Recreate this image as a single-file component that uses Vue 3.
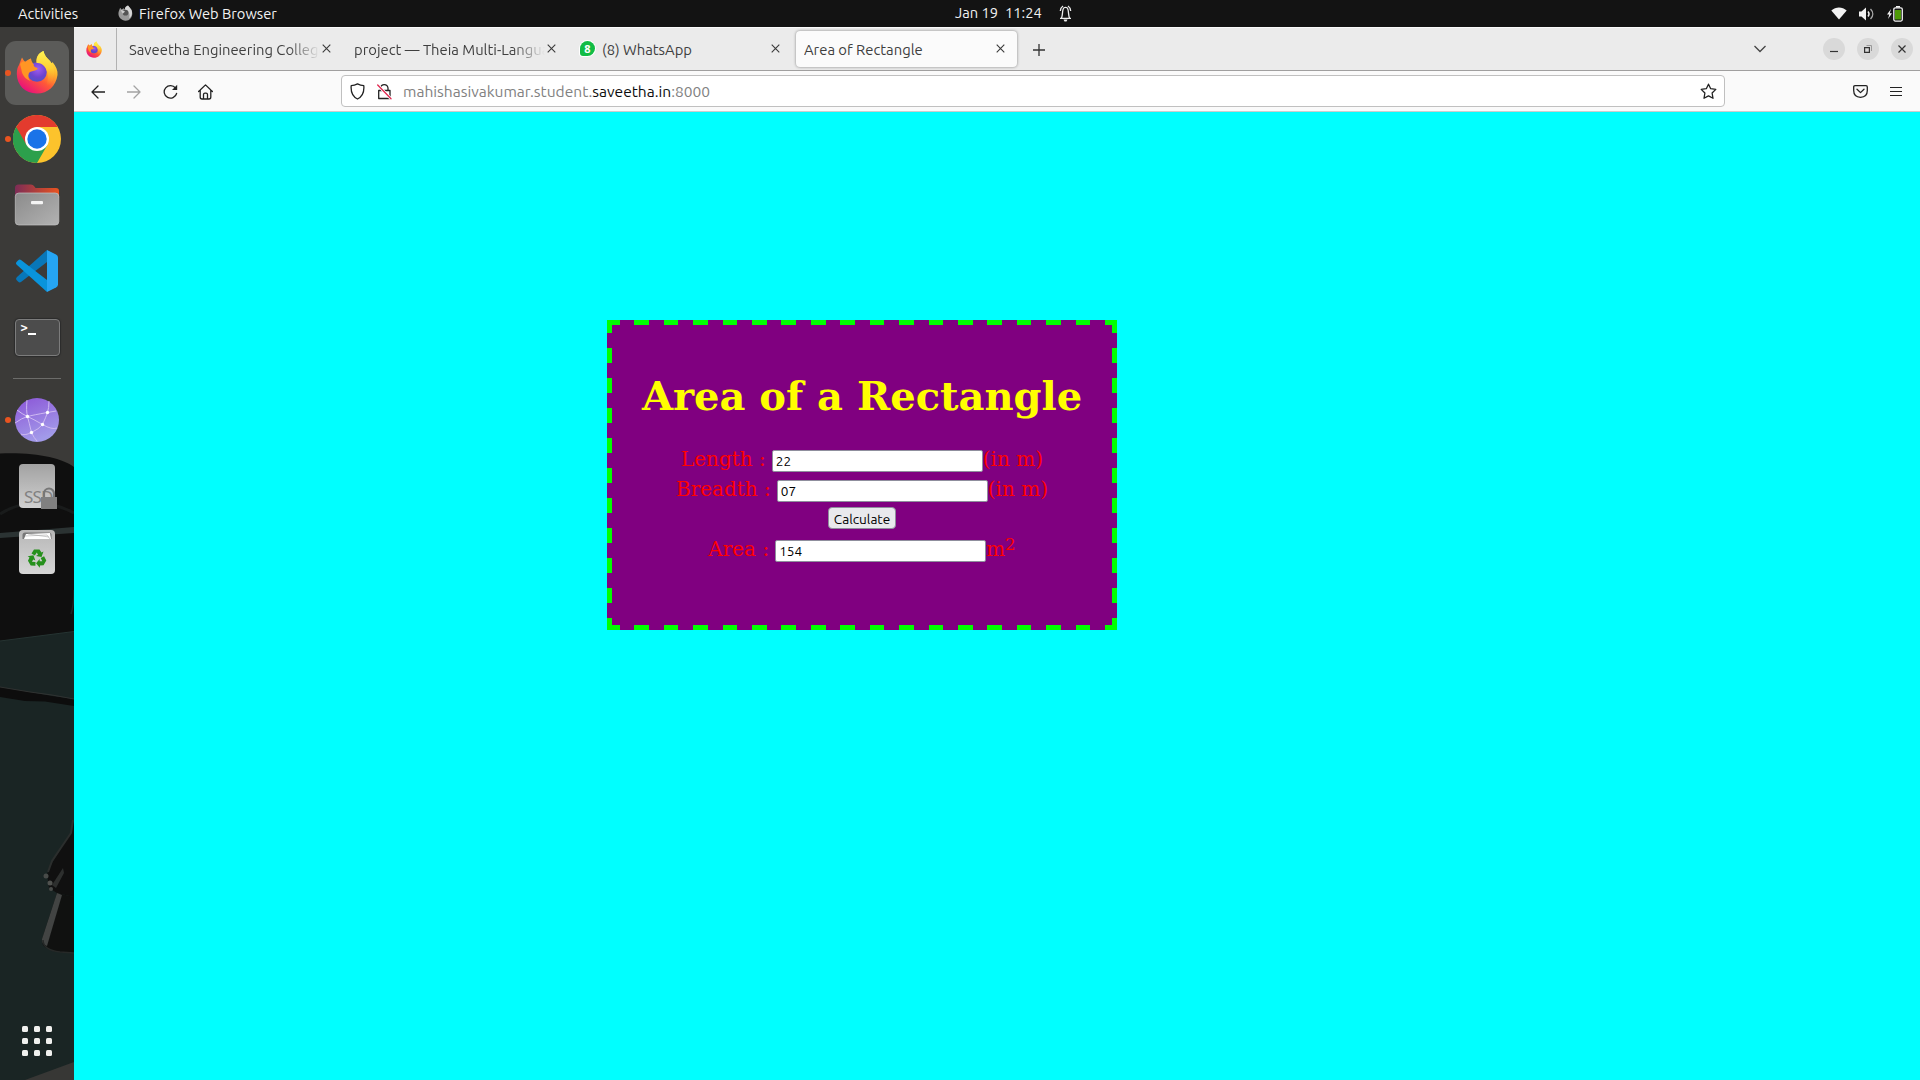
<script setup>
import { ref } from 'vue'

const length = ref('22')
const breadth = ref('07')
const area = ref('154')
const gridDots = Array.from({ length: 9 }, (_, i) => i)
</script>

<template>
  <div class="desktop">
    <svg width="0" height="0" class="defs">
      <defs>
        <linearGradient id="fxBody" x1=".85" y1=".1" x2=".25" y2=".95">
          <stop offset="0" stop-color="#fff04a" /><stop offset=".3" stop-color="#ffb32a" />
          <stop offset=".6" stop-color="#ff5a36" /><stop offset="1" stop-color="#e9127a" />
        </linearGradient>
        <radialGradient id="fxGlobe" cx=".55" cy=".35" r=".7">
          <stop offset="0" stop-color="#a05cf0" /><stop offset=".6" stop-color="#6d43cf" /><stop offset="1" stop-color="#4a55c8" />
        </radialGradient>
        <linearGradient id="fxFlame" x1=".5" y1="0" x2=".5" y2="1">
          <stop offset="0" stop-color="#fff452" /><stop offset=".5" stop-color="#ffcf35" /><stop offset="1" stop-color="#ff8a28" stop-opacity="0" />
        </linearGradient>
        <symbol id="firefox" viewBox="0 0 42 44">
          <path d="M3 15C4 12 5 10 6 7.500C7 9 8 11 9 12C11 10 13.500 9 15 8.500C15 11 16 13 18 14L21 13C19.500 8 22 3 27.500 1C28 5 31 8 34 11C35 13 36 14 36.500 12C40 16 42 21 41.500 25C40 36 32 43.500 21 43.500C9 43.500 1 35 .8 24C.8 20 1.500 17 3 15Z" fill="url(#fxBody)" />
          <circle cx="21" cy="22" r="9.800" fill="url(#fxGlobe)" />
          <path d="M20.500 13C20 7 23 3 27.500 1C28 5 31 8 34 11C38 16 39.500 22 37 29C36 33 33 36 30 36C33 30 32.500 21 28 16C26 13.500 23 12.500 20.500 13Z" fill="url(#fxFlame)" />
          <path d="M4 14C6 11 9 11.500 10 12L15 8.500C15 11 16 13 18 14.500C17 15.500 18 17 21.500 18Q22 19.500 19 20.500C16.500 21.500 14 21 13 23C12 26 12 29 15 31C11 30 6 26 5.500 20Z" fill="#ff9524" />
        </symbol>
      </defs>
    </svg>

    <header class="topbar">
      <span class="activities">Activities</span>
      <svg class="app-icon" width="15" height="16" viewBox="0 0 42 44">
        <path d="M3 15L6 7L10 12L16 9L19 13C19 7 22 3 28 1L37 12C45 26 36 44 21 43.500C7 43 -3 29 3 15Z" fill="#999" />
        <path d="M19 13C20 7 22 3 28 1L37 12C42 22 38 32 31 36C35 26 30 14 19 13Z" fill="#d8d8d8" />
        <circle cx="21" cy="21" r="8" fill="#555" /><path d="M7 13L20 18L13 24Z" fill="#ccc" />
      </svg>
      <span class="app-name">Firefox Web Browser</span>
      <span class="date">Jan 19</span>
      <span class="clock">11:24</span>
      <svg class="bell" width="15" height="17" viewBox="0 0 15 17" fill="none" stroke="#eee" stroke-width="1.300">
        <path d="M2 13.300H13M3.500 13C5 10 4 4 6 2.800C7 2.200 8 2.200 9 2.800C11 4 10 10 11.500 13M2.300 6C2.500 3.500 3.500 2 5 1M12.700 6C12.500 3.500 11.500 2 10 1" />
        <path d="M5.500 14.500H9.500L8.500 16.500H6.500Z" fill="#eee" stroke="none" />
      </svg>
      <div class="tray">
        <svg width="16" height="13" viewBox="0 0 16 13"><path d="M.3 3.500C5-.5 11-.5 15.700 3.500L8 12.500Z" fill="#f2f2f2" /></svg>
        <svg width="16" height="14" viewBox="0 0 16 14">
          <path d="M0 4.500H2.500L7 .5V13.500L2.500 9.500H0Z" fill="#f2f2f2" />
          <path d="M9 4.500C10.300 6 10.300 8 9 9.500" fill="none" stroke="#f2f2f2" stroke-width="1.400" />
          <path d="M11.500 2C14.500 5 14.500 9 11.500 12" fill="none" stroke="#aaa" stroke-width="1.400" />
        </svg>
        <svg width="17" height="16" viewBox="0 0 17 16">
          <path d="M4 3L0 8.500H2.300L1 13L5 7.200H2.800Z" fill="#f2f2f2" />
          <rect x="6.800" y="1.800" width="8.500" height="13.300" rx="1.500" fill="none" stroke="#f2f2f2" stroke-width="1.300" />
          <rect x="9" y="0" width="4" height="1.500" fill="#f2f2f2" /><rect x="8" y="4" width="6" height="9.500" fill="#4e9a06" />
        </svg>
      </div>
    </header>

    <div class="main">
      <aside class="dock">
        <svg class="wallpaper" width="74" height="1053" viewBox="0 27 74 1053">
          <rect y="27" width="74" height="1053" fill="#3b3a38" />
          <path d="M0 453.500C35 452 62 458 74 467V1080H0Z" fill="#0f0f0f" />
          <path d="M0 514C20 501 48 499 74 513" fill="none" stroke="#191b1b" stroke-width="3" />
          <path d="M0 533L74 527V533L0 538Z" fill="#2b3333" />
          <path d="M74 590Q74 605 71 614" fill="none" stroke="#202323" stroke-width="1.500" />
          <path d="M0 641L74 631.500V1080H0Z" fill="#1a2524" />
          <path d="M0 641L74 631.500" stroke="#263432" />
          <path d="M0 687L30 692L52 696L74 699V706L45 701.500L25 701L0 697Z" fill="#0d0d0d" />
          <path d="M0 687L30 692L52 695L74 699" stroke="#303332" stroke-width="1" fill="none" />
          <path d="M74 820L71 832L52 863L47 874L49 888L57 893L74 897Z" fill="#101010" />
          <path d="M73 820L71 833L52 861L48 872" stroke="#2b2e2d" stroke-width="2" fill="none" />
          <path d="M63 868L52 885L56 888L64 873Z" fill="#2d2f2e" />
          <path d="M57 893L74 897V953Q55 953 48 949Q41 946 42 939Z" fill="#101110" />
          <path d="M57 893L62 895L47 946Q41 944 42 939Z" fill="#424443" />
          <path d="M43 940Q43 950 60 952L74 953" stroke="#262928" stroke-width="1.500" fill="none" />
          <circle cx="46" cy="876" r="2.500" fill="#484b49" /><circle cx="50" cy="883" r="2.500" fill="#50524f" /><circle cx="51" cy="889" r="2" fill="#484b49" />
          <path d="M25 1080L74 1062V1080Z" fill="#373735" />
        </svg>
        <div class="slot running">
          <div class="tile"><svg width="42" height="44"><use href="#firefox" /></svg></div>
        </div>
        <div class="slot running">
          <svg width="48" height="48" viewBox="0 0 48 48">
            <circle cx="24" cy="24" r="24" fill="#fcc32c" />
            <path d="M24 24L3.200 12A24 24 0 0 0 24 48L34.400 30Z" fill="#2ca04c" />
            <path d="M3.200 12A24 24 0 0 1 44.800 12H24L13.600 30Z" fill="#e33b2e" />
            <circle cx="24" cy="24" r="12" fill="#fff" /><circle cx="24" cy="24" r="9.700" fill="#1a73e8" />
          </svg>
        </div>
        <div class="slot">
          <svg width="46" height="42" viewBox="0 0 46 42">
            <defs>
              <linearGradient id="fold"><stop offset="0" stop-color="#7c2c56" /><stop offset="1" stop-color="#e95420" /></linearGradient>
              <linearGradient id="front" x1="0" y1="0" x2="1" y2="1"><stop offset="0" stop-color="#8b8b8b" /><stop offset="1" stop-color="#b2b2b2" /></linearGradient>
            </defs>
            <path d="M1 14V4Q1 .5 4.500 .5H17Q19 .5 20 2L21.500 4H42Q45 4 45 7V14Z" fill="url(#fold)" />
            <rect x="1.300" y="9" width="43.500" height="32" rx="3.500" fill="url(#front)" stroke="#c4c4c4" stroke-width=".7" />
            <rect x="17" y="17" width="12" height="3.200" rx="1" fill="#f5f5f5" />
          </svg>
        </div>
        <div class="slot">
          <svg width="42" height="42" viewBox="0 0 42 42">
            <path d="M31 0V12L5 32Q3.500 33 2 31.500L.5 30Q-.5 28.500 1 27Z" fill="#0877b9" />
            <path d="M31 42V30L5 10Q3.500 9 2 10.500L.5 12Q-.5 13.500 1 15Z" fill="#0994dc" />
            <path d="M31 0L40 4.500Q42 5.500 42 7.500V34.500Q42 36.500 40 37.500L31 42Z" fill="#25a5f3" />
          </svg>
        </div>
        <div class="slot">
          <div class="terminal"><span>&gt;</span><i></i></div>
        </div>
        <div class="divider"></div>
        <div class="slot running">
          <svg width="44" height="44" viewBox="0 0 44 44">
            <defs><linearGradient id="web" x1="0" y1="0" x2=".4" y2="1"><stop offset="0" stop-color="#8b55d7" /><stop offset="1" stop-color="#a29ae9" /></linearGradient></defs>
            <circle cx="22" cy="22" r="22" fill="url(#web)" />
            <path d="M12 2Q11 13 12.500 18.500T16.500 34.500Q19 40 22 43M34 3Q34 10 32.500 14.500T27.500 26.500Q24 31 16.500 34.500T6 36M2 12Q7 16 12.500 18.500T27.500 26.500T42 30M0 25Q7 20 12.500 18.500T32.500 14.500L41 13" fill="none" stroke="#ceb9f1" stroke-width="1" />
            <g fill="#fff"><circle cx="12.500" cy="18.500" r="1.700" /><circle cx="32.500" cy="14.500" r="1.700" /><circle cx="27.500" cy="26.500" r="1.700" /><circle cx="16.500" cy="34.500" r="1.700" /></g>
          </svg>
        </div>
        <div class="slot">
          <div class="ssd">
            <span>SSD</span>
            <svg class="lock" width="16" height="22" viewBox="0 0 16 22"><path d="M3 10V6.500A5 5 0 0 1 13 6.500V10" fill="none" stroke="#777" stroke-width="2.200" /><rect y="10" width="16" height="12" fill="#808080" /></svg>
          </div>
        </div>
        <div class="slot">
          <svg width="36" height="44" viewBox="0 0 36 44">
            <defs><linearGradient id="bin" x1="0" y1="0" x2="0" y2="1"><stop offset="0" stop-color="#b7b7b7" /><stop offset="1" stop-color="#d6d6d6" /></linearGradient></defs>
            <rect width="36" height="44" rx="4" fill="url(#bin)" />
            <path d="M3.500 9V5Q3.500 2.500 6 2.500H30Q32.500 2.500 32.500 5V9Z" fill="#777" />
            <path d="M5 9L7 4L31 3L32 9Z" fill="#fff" /><path d="M6 6L28 5L31 9M9 4L30 7" stroke="#aaa" stroke-width=".6" fill="none" />
            <g fill="#26901c">
              <path id="rarrow" d="M12.500 23.500L15 19.500H20.500L22.500 22.500L24.500 21.500L22.500 27L17 26L19 24.800L17.800 22.500L15.800 25.500Z" />
              <use href="#rarrow" transform="rotate(120 18 28.500)" /><use href="#rarrow" transform="rotate(240 18 28.500)" />
            </g>
          </svg>
        </div>
        <div class="apps"><i v-for="d in gridDots" :key="d"></i></div>
      </aside>

      <section class="browser">
        <div class="tabs">
          <div class="pinned"><svg width="16" height="17"><use href="#firefox" /></svg></div>
          <div class="tab t1"><span class="label fade l1">Saveetha Engineering College</span><svg class="x" viewBox="0 0 9 9"><path d="M.7 .7L8.300 8.300M8.300 .7L.7 8.300" /></svg></div>
          <div class="tab t2"><span class="label fade l2">project — Theia Multi-Language</span><svg class="x" viewBox="0 0 9 9"><path d="M.7 .7L8.300 8.300M8.300 .7L.7 8.300" /></svg></div>
          <div class="tab t3"><span class="wa"><b>8</b></span><span class="label l3">(8) WhatsApp</span><svg class="x" viewBox="0 0 9 9"><path d="M.7 .7L8.300 8.300M8.300 .7L.7 8.300" /></svg></div>
          <div class="tab active"><span class="label l4">Area of Rectangle</span><svg class="x" viewBox="0 0 9 9"><path d="M.7 .7L8.300 8.300M8.300 .7L.7 8.300" /></svg></div>
          <svg class="plus" width="12" height="12" viewBox="0 0 12 12"><path d="M6 0V12M0 6H12" stroke="#333" stroke-width="1.300" /></svg>
          <svg class="all-tabs" width="12" height="8" viewBox="0 0 12 8"><path d="M.5 1L6 6.500L11.500 1" fill="none" stroke="#444" stroke-width="1.300" /></svg>
          <div class="window-controls">
            <span><svg width="8" height="8"><path d="M0 7H8" transform="translate(0 -.5)" /></svg></span>
            <span><svg width="8" height="8"><path d="M.6 2.600H5.400V7.400H.6Z" /><path d="M2.500 .5H7.500V6" class="rear" /></svg></span>
            <span><svg width="8" height="8"><path d="M.5 .5L7.500 7.500M7.500 .5L.5 7.500" /></svg></span>
          </div>
        </div>

        <div class="toolbar">
          <svg class="nav back" width="14" height="14" viewBox="0 0 14 14"><path d="M14 7H1M7 1L1 7L7 13" /></svg>
          <svg class="nav forward" width="14" height="14" viewBox="0 0 14 14"><path d="M0 7H13M7 1L13 7L7 13" /></svg>
          <svg class="nav reload" width="15" height="15" viewBox="0 0 15 15"><path d="M12.500 4A6.300 6.300 0 1 0 13.600 9.500" /><path d="M14.200 .8V6H9Z" /></svg>
          <svg class="nav home" width="15" height="16" viewBox="0 0 15 16"><path d="M.6 7.500L7.500 .9L14.400 7.500M2.200 6V13Q2.200 15 4 15H11Q12.800 15 12.800 13V6M5.500 15V10.500Q5.500 9.200 7 9.200H8Q9.500 9.200 9.500 10.500V15" /></svg>
          <div class="urlbar">
            <svg class="shield" width="15" height="17" viewBox="0 0 15 17"><path d="M7.500 .9Q10.500 2.500 13.800 2.700Q14.700 12.500 7.500 16Q.3 12.500 1.200 2.700Q4.500 2.500 7.500 .9Z" /></svg>
            <svg class="lock-off" width="15" height="17" viewBox="0 0 15 17"><path d="M3.500 7.500V5A3.800 4 0 0 1 11 5V7.500M1.700 7.500H13V15.500H1.700Z" /><path d="M.7 2L14 15.800" /><path d="M.7 2L14 15.800" /></svg>
            <span class="url">mahishasivakumar.student.<b>saveetha.in</b>:8000</span>
            <svg class="star" width="17" height="17" viewBox="0 0 17 17"><path d="M8.500 1.200L10.700 5.700L15.800 6.400L12.100 10L13 15.300L8.500 12.900L4 15.300L4.900 10L1.200 6.400L6.300 5.700Z" /></svg>
          </div>
          <svg class="pocket" width="15" height="13" viewBox="0 0 15 13"><path d="M2 .7H13Q14.300 .7 14.300 2V5.500Q14.300 12 7.500 12.300Q.7 12 .7 5.500V2Q.7 .7 2 .7ZM4 4.300L7.500 7.600L11 4.300" /></svg>
          <svg class="menu" width="12" height="11" viewBox="0 0 12 11"><path d="M0 1.500H12M0 5.500H12M0 9.500H12" /></svg>
        </div>

        <main class="page">
          <form class="card" @submit.prevent>
            <h1>Area of a Rectangle</h1>
            <div class="row"><label>Length :</label><input v-model="length" /><span>(in m)</span></div>
            <div class="row"><label>Breadth :</label><input v-model="breadth" /><span>(in m)</span></div>
            <div class="row action"><button type="button">Calculate</button></div>
            <div class="row"><label>Area :</label><input v-model="area" /><span>m<sup>2</sup></span></div>
          </form>
        </main>
      </section>
    </div>
  </div>
</template>

<style>
body { margin: 0; overflow: hidden; }
</style>

<style scoped>
* { box-sizing: border-box; }
svg { display: block; flex: none; }
.defs { position: absolute; }
.desktop { width: 1920px; height: 1080px; display: flex; flex-direction: column; font-family: Ubuntu, "Noto Sans", sans-serif; font-size: 14.67px; overflow: hidden; white-space: nowrap; }

.topbar { height: 27px; background: #131313; color: #f2f2f2; display: flex; align-items: center; line-height: 27px; flex: none; }
.topbar span { flex: none; height: 27px; }
.activities { width: 100px; padding-left: 18px; }
.app-icon { margin-left: 18px; margin-top: -2px; }
.app-name { margin-left: 6px; width: 816px; }
.topbar .date, .topbar .clock { line-height: 26px; }
.date { width: 50px; }
.clock { width: 53px; }
.bell { margin-top: -1px; }
.tray { margin-left: auto; padding-right: 16px; display: flex; align-items: center; gap: 12px; }

.main { flex: 1; display: flex; min-height: 0; }
.dock { position: relative; width: 74px; flex: none; padding-top: 13px; display: flex; flex-direction: column; align-items: center; }
.wallpaper { position: absolute; left: 0; top: 0; }
.slot { position: relative; width: 74px; height: 66px; display: flex; align-items: center; justify-content: center; flex: none; }
.running::before { content: ""; position: absolute; left: 5px; top: 30px; width: 6px; height: 6px; border-radius: 50%; background: #e95420; z-index: 1; }
.tile { width: 64px; height: 64px; border-radius: 11px; background: #5b5b59; display: flex; justify-content: center; padding-top: 9px; }
.terminal { width: 45px; height: 37px; border: 1px solid #7c7c7c; border-radius: 4px; background: #4c4c4c; color: #fff; display: flex; padding-left: 5px; box-shadow: 0 0 1px 1px #2c2c2c; }
.terminal span { font: bold 12px/16px "DejaVu Sans Mono", monospace; }
.terminal i { width: 8px; height: 2px; margin-top: 13px; background: #fff; }
.divider { position: relative; width: 48px; height: 1px; background: #6c6c6a; margin: 8px 0 8px; flex: none; }
.ssd { position: relative; width: 36px; height: 44px; border-radius: 4px; background: linear-gradient(#a2a2a2, #d0d0d0); color: #818181; font: 17px/17px "Noto Sans", sans-serif; padding: 24px 0 0 5px; letter-spacing: -.8px; }
.lock { position: absolute; right: -2px; bottom: -1px; }
.apps { position: relative; margin-top: auto; margin-bottom: 24px; display: grid; grid-template-columns: repeat(3, 6px); gap: 6px; }
.apps i { height: 6px; border-radius: 1.5px; background: #f0f0ee; }

.browser { flex: 1; display: flex; flex-direction: column; min-width: 0; }
.tabs { height: 44px; background: #ebebeb; border-top: 1px solid #fafafa; border-bottom: 1px solid #a09f9f; display: flex; align-items: center; color: #3f3f3f; flex: none; }
.pinned { width: 43px; height: 100%; border-right: 1px solid #b2b2b2; padding: 13px 0 0 12px; flex: none; }
.tab { height: 36px; display: flex; align-items: center; justify-content: space-between; flex: none; font-size: 14.8px; line-height: 36px; }
.label { overflow: hidden; padding-top: 1px; height: 36px; }
.fade { -webkit-mask-image: linear-gradient(90deg, #000 calc(100% - 32px), transparent); mask-image: linear-gradient(90deg, #000 calc(100% - 32px), transparent); }
.x { width: 9px; height: 9px; margin-top: -1px; stroke: #3a3a3a; stroke-width: 1.1; }
.t1 { width: 225px; padding: 0 11px 0 12px; }
.l1 { width: 191px; }
.t2 { width: 225px; padding: 0 11px 0 12px; }
.l2 { width: 191px; }
.t3 { width: 229px; padding: 0 16px 0 13px; }
.l3 { flex: 1; padding-left: 7px; }
.wa { width: 15px; height: 15px; margin-top: -1px; border-radius: 50% 50% 50% 20%; background: #12bc45; color: #fff; text-align: center; box-shadow: 0 0 0 1px #fff; }
.wa b { display: block; font: bold 11px/15px "Noto Sans", sans-serif; }
.active { width: 221px; padding: 0 12px 0 8px; background: #fbfbfb; border-radius: 4px; box-shadow: 0 0 3px rgba(0,0,0,.45); }
.plus { margin-left: 16px; margin-top: 1px; }
.all-tabs { margin-left: auto; margin-top: -1px; }
.window-controls { display: flex; gap: 12px; margin: 0 7px 0 57px; }
.window-controls span { width: 22px; height: 22px; border-radius: 50%; background: #d9d9d9; display: flex; align-items: center; justify-content: center; }
.window-controls path { stroke: #333; stroke-width: 1.2; fill: none; }
.window-controls .rear { stroke: #999; stroke-width: 1; }

.toolbar { height: 41px; background: #fafafa; border-bottom: 1px solid #ccc; display: flex; align-items: center; flex: none; }
.toolbar path { fill: none; stroke: #222; stroke-width: 1.3; stroke-linecap: round; stroke-linejoin: round; }
.nav { margin-top: 1px; }
.back { margin-left: 17px; }
.forward { margin-left: 22px; opacity: .4; }
.reload { margin-left: 22px; }
.home { margin-left: 20px; }
.urlbar { width: 1384px; height: 32px; margin-left: 128px; border: 1px solid #c0c0c0; border-radius: 4px; background: #fff; display: flex; align-items: center; font-size: 15.55px; line-height: 30px; color: #818181; flex: none; }
.toolbar .reload path:last-child { fill: #222; stroke: none; }
.toolbar .lock-off path:nth-child(2) { stroke: #fff; stroke-width: 3; }
.toolbar .lock-off path:nth-child(3) { stroke: #e22850; }
.shield { margin-left: 8px; }
.lock-off { margin-left: 12px; }
.url { margin-left: 11px; padding-top: 1px; }
.url b { color: #0c0c0d; font-weight: normal; }
.star { margin-left: auto; margin-right: 7px; }
.pocket { margin-left: 128px; }
.menu { margin-left: 22px; }
.toolbar .menu path { stroke-width: 1.2; }

.page { flex: 1; background: #0ff; padding: 208px 0 0 533px; }
.card {
  --h: repeating-linear-gradient(90deg, #0f0 0 14.71px, transparent 14.71px 29.42px);
  --v: repeating-linear-gradient(180deg, #0f0 0 15px, transparent 15px 30px);
  width: 510px; height: 310px; padding-top: 52px;
  background: var(--h) -2.1px 0 / 520px 5px no-repeat, var(--h) -2.1px 100% / 520px 5px no-repeat, var(--v) 0 -2px / 5px 320px no-repeat, var(--v) 100% -2px / 5px 320px no-repeat, purple;
  color: red; font: 20px/30px "DejaVu Serif", serif;
}
h1 { margin: 0 0 27px; font-size: 40px; line-height: 47px; color: #ff0; text-align: center; }
.row { height: 30px; display: flex; justify-content: center; align-items: center; }
label { margin-right: 6px; }
.row label, .row span { margin-top: -4px; }
input { width: 211px; height: 22px; padding: 0 3px; border: 1px solid #8f8f9d; border-radius: 2px; background: #fff; font: 13.6px/18px Ubuntu, "Noto Sans", sans-serif; color: #000; outline: none; }
sup { font-size: 16.67px; line-height: 0; vertical-align: 6px; }
.action { align-items: flex-start; padding-top: 1px; }
button { width: 68px; height: 22px; padding: 1px 0 0; border: 1px solid #8f8f9d; border-radius: 4px; background: #e9e9ed; color: #000; font: 13.6px/18px Ubuntu, "Noto Sans", sans-serif; }
</style>
